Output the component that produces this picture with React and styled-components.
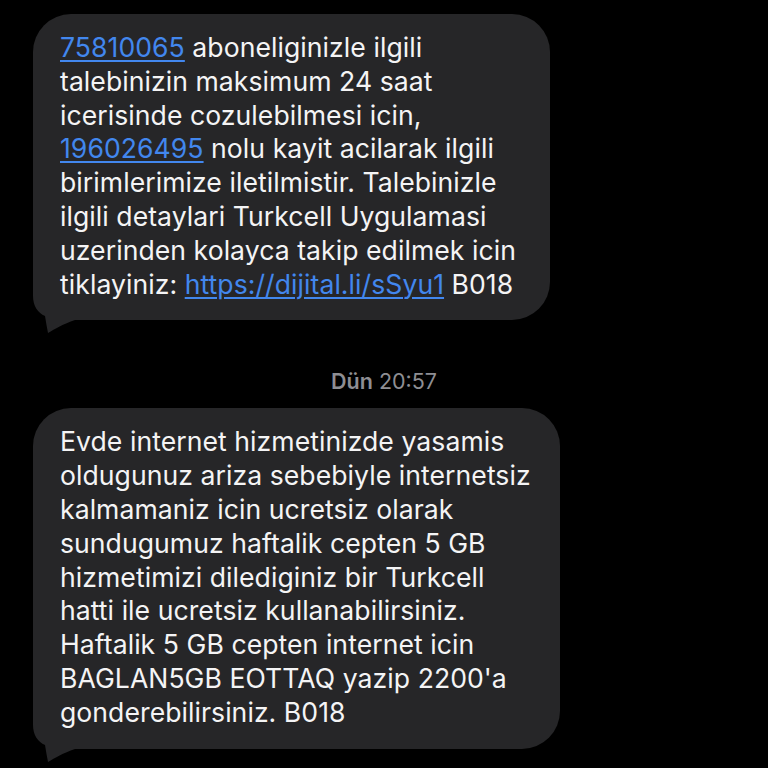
import styled, { createGlobalStyle } from 'styled-components';

const GlobalStyle = createGlobalStyle`
  html, body {
    margin: 0;
    padding: 0;
    background: #000;
  }
  body {
    font-family: Inter, "Liberation Sans", "Noto Sans", sans-serif;
    -webkit-font-smoothing: antialiased;
  }
`;

const first = [
  [{ link: '75810065' }, ' aboneliginizle ilgili'],
  ['talebinizin maksimum 24 saat'],
  ['icerisinde cozulebilmesi icin,'],
  [{ link: '196026495' }, ' nolu kayit acilarak ilgili'],
  ['birimlerimize iletilmistir. Talebinizle'],
  ['ilgili detaylari Turkcell Uygulamasi'],
  ['uzerinden kolayca takip edilmek icin'],
  ['tiklayiniz: ', { link: 'https://dijital.li/sSyu1' }, ' B018'],
];

const second = [
  ['Evde internet hizmetinizde yasamis'],
  ['oldugunuz ariza sebebiyle internetsiz'],
  ['kalmamaniz icin ucretsiz olarak'],
  ['sundugumuz haftalik cepten 5 GB'],
  ['hizmetimizi dilediginiz bir Turkcell'],
  ['hatti ile ucretsiz kullanabilirsiniz.'],
  ['Haftalik 5 GB cepten internet icin'],
  ["BAGLAN5GB EOTTAQ yazip 2200'a"],
  ['gonderebilirsiniz. B018'],
];

function Tail() {
  return (
    <TailSvg width="50" height="52" viewBox="0 0 50 52">
      <path
        d="M0 0 L0 14 C0 24 5 31 12 34 C13 40 14 46 15 51 C22 47 30 42 42 38 L50 38 L50 0 Z"
        fill="#262628"
      />
    </TailSvg>
  );
}

function Message({ lines, width }) {
  return (
    <Bubble $width={width}>
      <Tail />
      {lines.map((parts, i) => (
        <Line key={i}>
          {parts.map((p, j) =>
            typeof p === 'string' ? p : <Link key={j}>{p.link}</Link>
          )}
        </Line>
      ))}
    </Bubble>
  );
}

export default function App() {
  return (
    <>
      <GlobalStyle />
      <Thread>
        <Message lines={first} width={517} />
        <Stamp>
          <b>Dün</b> 20:57
        </Stamp>
        <Message lines={second} width={527} />
      </Thread>
    </>
  );
}

const Thread = styled.div`
  width: 768px;
  height: 768px;
  overflow: hidden;
  box-sizing: border-box;
  padding: 14px 0 0 33px;
  display: flex;
  flex-direction: column;
  align-items: flex-start;
`;

const Bubble = styled.div`
  position: relative;
  box-sizing: border-box;
  width: ${({ $width }) => $width}px;
  padding: 17px 10px 19px 27px;
  background: #262628;
  border-radius: 38px;
  color: #f4f4f5;
  font-size: 26.6px;
  letter-spacing: 0.05px;
  line-height: 33.8px;
  white-space: nowrap;
`;

const Line = styled.div`
  position: relative;
  z-index: 1;
`;

const Link = styled.span`
  color: #4287ee;
  text-decoration: underline;
  text-decoration-thickness: 2px;
  text-underline-offset: 3px;
`;

const TailSvg = styled.svg`
  position: absolute;
  left: 0;
  bottom: -14px;
  display: block;
  z-index: 0;
`;

const Stamp = styled.div`
  align-self: stretch;
  margin: 49px 0 15px -33px;
  text-align: center;
  color: #8e8e93;
  font-size: 21.5px;
  line-height: 24px;

  b {
    font-weight: 600;
  }
`;
